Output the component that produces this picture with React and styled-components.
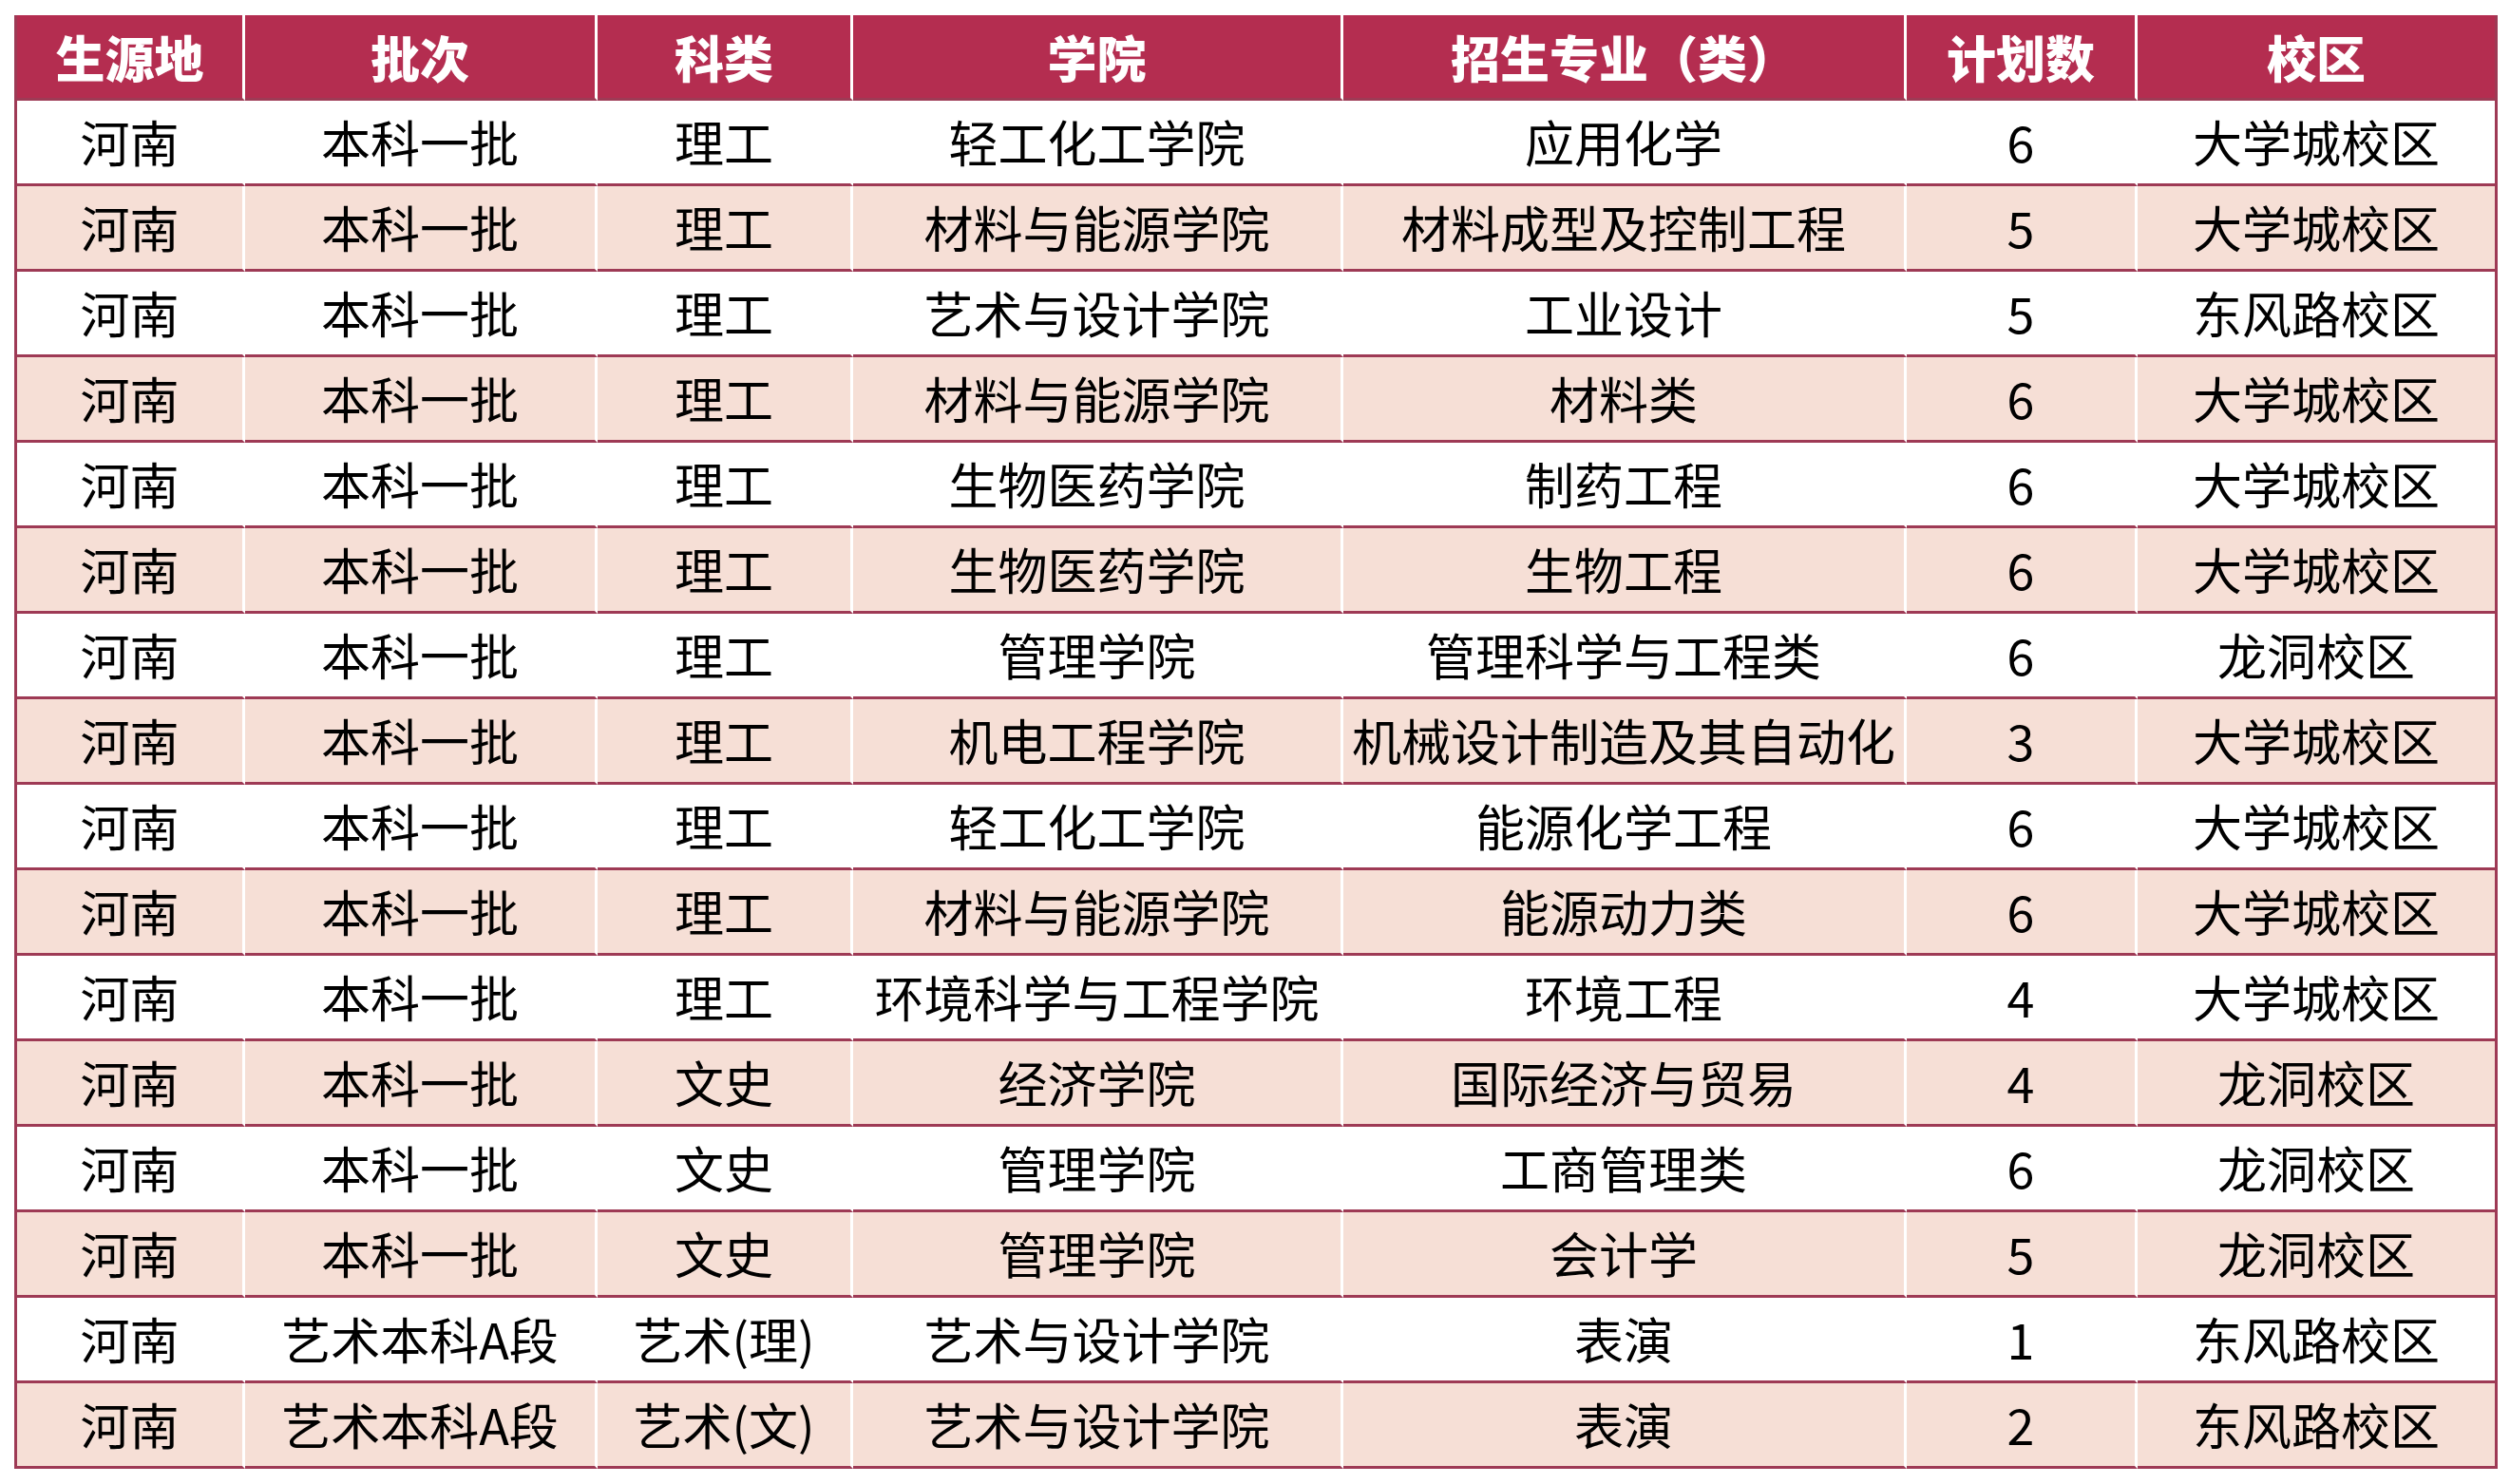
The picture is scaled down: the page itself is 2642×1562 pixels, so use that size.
import React from 'react'
import styled, { createGlobalStyle } from 'styled-components'

const GlobalStyle = createGlobalStyle`
  body {
    margin: 0;
    background: #ffffff;
    font-family: "Noto Sans CJK SC", "Noto Sans", sans-serif;
  }
`

const Page = styled.div`
  padding: 16px 0 0 15px;
`

const Grid = styled.div`
  display: grid;
  grid-template-columns: 240px 371px 269px 516px 593px 243px 376px;
  width: fit-content;
  border-left: 3px solid #9e3a55;
  border-right: 3px solid #9e3a55;
`

const HeadCell = styled.div`
  height: 90px;
  box-sizing: border-box;
  display: flex;
  align-items: center;
  justify-content: center;
  background: #b42d50;
  color: #ffffff;
  font-size: 52px;
  font-weight: 900;
  border-right: 3px solid #ffffff;
  border-bottom: 3px solid #9e3a55;
  &:nth-child(7) {
    border-right: none;
  }
`

const Cell = styled.div`
  height: 90px;
  box-sizing: border-box;
  display: flex;
  align-items: center;
  justify-content: center;
  padding-bottom: 2px;
  background: ${(p) => (p.$alt ? '#f6dfd6' : '#ffffff')};
  color: #000000;
  font-size: 52px;
  font-weight: 400;
  white-space: nowrap;
  border-right: ${(p) => (p.$last ? 'none' : '3px solid #ffffff')};
  border-bottom: 3px solid #9e3a55;
`

const headers = ['生源地', '批次', '科类', '学院', '招生专业（类）', '计划数', '校区']

const rows = [
  ['河南', '本科一批', '理工', '轻工化工学院', '应用化学', '6', '大学城校区'],
  ['河南', '本科一批', '理工', '材料与能源学院', '材料成型及控制工程', '5', '大学城校区'],
  ['河南', '本科一批', '理工', '艺术与设计学院', '工业设计', '5', '东风路校区'],
  ['河南', '本科一批', '理工', '材料与能源学院', '材料类', '6', '大学城校区'],
  ['河南', '本科一批', '理工', '生物医药学院', '制药工程', '6', '大学城校区'],
  ['河南', '本科一批', '理工', '生物医药学院', '生物工程', '6', '大学城校区'],
  ['河南', '本科一批', '理工', '管理学院', '管理科学与工程类', '6', '龙洞校区'],
  ['河南', '本科一批', '理工', '机电工程学院', '机械设计制造及其自动化', '3', '大学城校区'],
  ['河南', '本科一批', '理工', '轻工化工学院', '能源化学工程', '6', '大学城校区'],
  ['河南', '本科一批', '理工', '材料与能源学院', '能源动力类', '6', '大学城校区'],
  ['河南', '本科一批', '理工', '环境科学与工程学院', '环境工程', '4', '大学城校区'],
  ['河南', '本科一批', '文史', '经济学院', '国际经济与贸易', '4', '龙洞校区'],
  ['河南', '本科一批', '文史', '管理学院', '工商管理类', '6', '龙洞校区'],
  ['河南', '本科一批', '文史', '管理学院', '会计学', '5', '龙洞校区'],
  ['河南', '艺术本科A段', '艺术(理)', '艺术与设计学院', '表演', '1', '东风路校区'],
  ['河南', '艺术本科A段', '艺术(文)', '艺术与设计学院', '表演', '2', '东风路校区'],
]

const App = () => (
  <Page>
    <GlobalStyle />
    <Grid>
      {headers.map((h) => (
        <HeadCell key={h}>{h}</HeadCell>
      ))}
      {rows.map((row, i) =>
        row.map((v, j) => (
          <Cell key={i + '-' + j} $alt={i % 2 === 1} $last={j === row.length - 1}>
            {v}
          </Cell>
        ))
      )}
    </Grid>
  </Page>
)

export default App
